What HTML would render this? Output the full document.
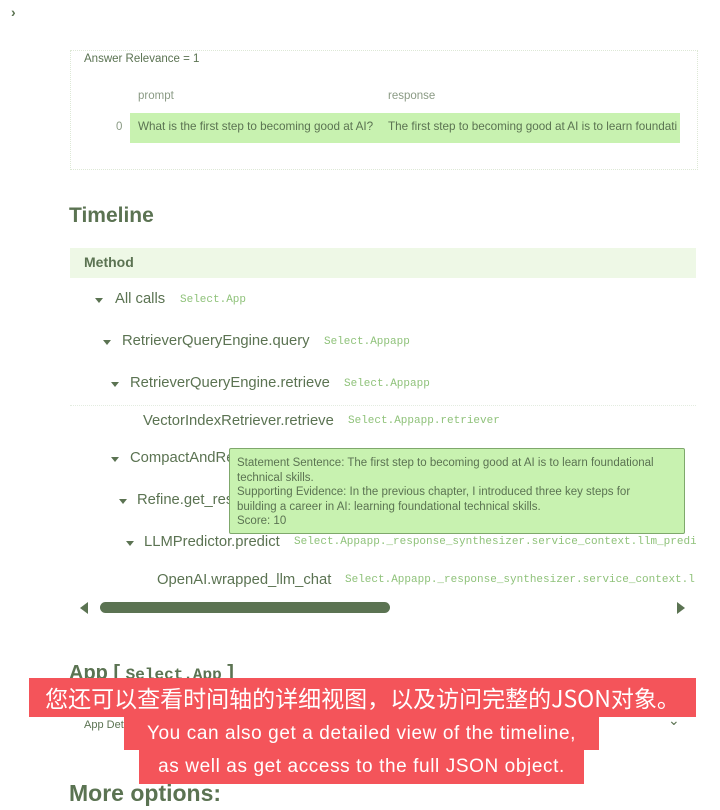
<!DOCTYPE html>
<html><head><meta charset="utf-8"><style>
body{margin:0;width:720px;height:810px;background:#fff;position:relative;overflow:hidden;font-family:"Liberation Sans","Noto Sans CJK SC",sans-serif;color:#5b7352}
.a{position:absolute;white-space:nowrap}
.m{font-family:"Liberation Mono",monospace;font-size:11px;color:#8fc27a}
.t{font-size:14.8px;color:#5b7352}
.tri{position:absolute;width:0;height:0;border-left:4px solid transparent;border-right:4px solid transparent;border-top:5px solid #5b7352}
.red{position:absolute;background:#f4545a;color:#fff;text-align:center;white-space:nowrap}
</style></head><body>
<div class="a" style="left:11px;top:4px;font-size:14px;font-weight:bold">›</div>
<div class="a" style="left:70px;top:50px;width:626px;height:118px;border:1px dotted #dde8d6"></div>
<div class="a" style="left:84px;top:53px;font-size:11.5px">Answer Relevance = 1</div>
<div class="a" style="left:138px;top:90px;font-size:11.5px;color:#8a9a84">prompt</div>
<div class="a" style="left:388px;top:90px;font-size:11.5px;color:#8a9a84">response</div>
<div class="a" style="left:130px;top:113px;width:550px;height:30px;background:#c8f2b0"></div>
<div class="a" style="left:116px;top:121px;font-size:11.5px;color:#8a9a84">0</div>
<div class="a" style="left:138px;top:120px;font-size:11.7px">What is the first step to becoming good at AI?</div>
<div class="a" style="left:388px;top:120px;font-size:11.7px;width:292px;overflow:hidden">The first step to becoming good at AI is to learn foundati</div>
<div class="a" style="left:69px;top:204px;font-size:21px;font-weight:bold">Timeline</div>
<div class="a" style="left:70px;top:248px;width:626px;height:30px;background:#eef8e6"></div>
<div class="a" style="left:84px;top:254px;font-size:14px;font-weight:bold">Method</div>

<div class="tri" style="left:95px;top:298px"></div><div class="a t" style="left:115px;top:291px">All calls</div><div class="a m" style="left:180px;top:294px">Select.App</div>
<div class="tri" style="left:103px;top:340px"></div><div class="a t" style="left:122px;top:333px">RetrieverQueryEngine.query</div><div class="a m" style="left:324px;top:336px">Select.Appapp</div>
<div class="tri" style="left:111px;top:382px"></div><div class="a t" style="left:130px;top:375px">RetrieverQueryEngine.retrieve</div><div class="a m" style="left:344px;top:378px">Select.Appapp</div>
<div class="a" style="left:70px;top:405px;width:626px;border-top:1px dotted #e3ece0"></div>
<div class="a t" style="left:143px;top:413px">VectorIndexRetriever.retrieve</div><div class="a m" style="left:348px;top:415px">Select.Appapp.retriever</div>
<div class="tri" style="left:111px;top:457px"></div><div class="a t" style="left:130px;top:450px">CompactAndRe</div>
<div class="tri" style="left:119px;top:499px"></div><div class="a t" style="left:137px;top:492px">Refine.get_res</div>
<div class="tri" style="left:126px;top:541px"></div><div class="a t" style="left:144px;top:534px">LLMPredictor.predict</div><div class="a m" style="left:294px;top:536px;width:402px;overflow:hidden">Select.Appapp._response_synthesizer.service_context.llm_predi</div>
<div class="a t" style="left:157px;top:572px">OpenAI.wrapped_llm_chat</div><div class="a m" style="left:345px;top:574px;width:351px;overflow:hidden">Select.Appapp._response_synthesizer.service_context.l</div>

<div class="a" style="left:229px;top:448px;width:454px;height:84px;background:#c8f2b0;border:1px solid #7fa86c;border-radius:2px"></div>
<div class="a" style="left:237px;top:456px;font-size:11.5px;line-height:14.5px;color:#5b7352">Statement Sentence: The first step to becoming good at AI is to learn foundational<br>technical skills.<br>Supporting Evidence: In the previous chapter, I introduced three key steps for<br>building a career in AI: learning foundational technical skills.<br>Score: 10</div>

<div class="a" style="left:80px;top:602px;width:0;height:0;border-top:6px solid transparent;border-bottom:6px solid transparent;border-right:8px solid #5b7352"></div>
<div class="a" style="left:100px;top:602px;width:290px;height:11px;background:#5b7352;border-radius:6px"></div>
<div class="a" style="left:677px;top:602px;width:0;height:0;border-top:6px solid transparent;border-bottom:6px solid transparent;border-left:8px solid #5b7352"></div>

<div class="a" style="left:69px;top:662px;font-size:20px;font-weight:bold">App [ <span style="font-family:'Liberation Mono',monospace;font-size:16px">Select.App</span> ]</div>
<div class="a" style="left:84px;top:719px;font-size:11px">App Det</div>
<div class="a" style="left:668px;top:712px;font-size:14px">⌄</div>
<div class="red" style="left:29px;top:678px;width:667px;height:39px;font-size:23px;line-height:39px;font-family:'Noto Sans CJK SC',sans-serif">您还可以查看时间轴的详细视图，以及访问完整的JSON对象。</div>
<div class="red" style="left:124px;top:717px;width:475px;height:33px;font-size:19px;line-height:33px;letter-spacing:0.6px">You can also get a detailed view of the timeline,</div>
<div class="red" style="left:139px;top:750px;width:445px;height:34px;font-size:19px;line-height:34px;letter-spacing:0.6px">as well as get access to the full JSON object.</div>
<div class="a" style="left:69px;top:780px;font-size:23px;font-weight:bold">More options:</div>
</body></html>
